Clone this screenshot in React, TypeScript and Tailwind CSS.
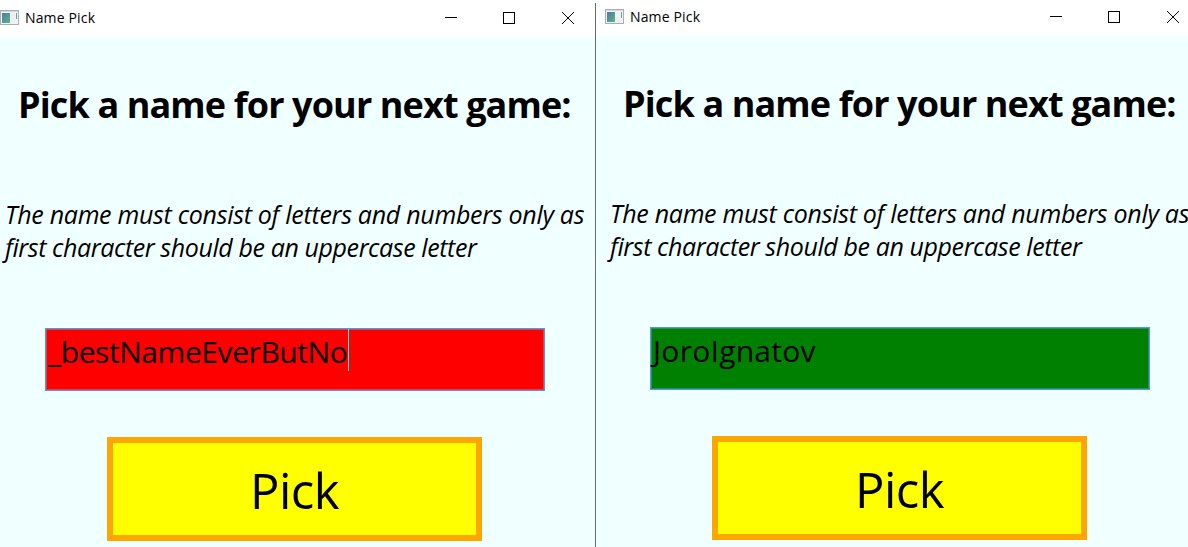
import clsx from "clsx";

type WindowProps = {
  value: string;
  valid: boolean;
  focused?: boolean;
  barClass: string;
  bodyClass: string;
};

function AppIcon() {
  return (
    <svg width="19" height="16" viewBox="0 0 19 16" shapeRendering="crispEdges" className="shrink-0">
      <defs>
        <linearGradient id="pane" x1="0" y1="0" x2="1" y2="1">
          <stop offset="0" stopColor="#4a7ba5" />
          <stop offset="1" stopColor="#5fb585" />
        </linearGradient>
      </defs>
      <rect x="0" y="0" width="19" height="15" fill="#a9adb8" />
      <rect x="1" y="1" width="17" height="13" fill="#f3f3f5" />
      <rect x="1" y="1" width="17" height="1" fill="#d5d8de" />
      <rect x="2" y="3" width="8" height="10" fill="url(#pane)" />
      <rect x="11" y="3" width="4" height="10" fill="#eeeff0" />
      <rect x="16" y="3" width="1" height="6" fill="#5aa596" />
    </svg>
  );
}

function TitleBar({ className }: { className: string }) {
  return (
    <div className={clsx("flex items-start bg-white", className)}>
      <AppIcon />
      <span className="ml-[6px] w-[120px] whitespace-nowrap text-[14px] leading-4 tracking-[0.15px]">Name Pick</span>
      <svg width="131" height="13" viewBox="0 0 131 13" fill="none" stroke="#000" className="ml-[300px] mt-[2px] shrink-0">
        <path d="M0 5.5H12" shapeRendering="crispEdges" />
        <rect x="58.5" y="0.5" width="11" height="11" shapeRendering="crispEdges" />
        <path d="M117 0L129 12M129 0L117 12" />
      </svg>
    </div>
  );
}

function NameWindow({ value, valid, focused, barClass, bodyClass }: WindowProps) {
  return (
    <div className="flex h-full flex-col overflow-hidden bg-[#f0ffff]">
      <TitleBar className={barClass} />
      <div className={clsx("flex flex-col items-start", bodyClass)}>
        <h1 className="ml-[18px] mt-[42px] whitespace-nowrap text-[36px] font-bold leading-[52px] tracking-[-0.88px]">
          Pick a name for your next game:
        </h1>
        <p className="ml-[5px] mt-[67px] whitespace-nowrap text-[25px] italic leading-[33px]">
          <span className="tracking-[-0.29px]">The name must consist of letters and numbers only as</span>
          <br />
          <span className="tracking-[-0.4px]">first character should be an uppercase letter</span>
        </p>
        <div
          className={clsx(
            "ml-[45px] mt-[64px] flex h-[63px] w-[500px] items-start border border-[#4f9be0] pl-[2px] text-[30px] leading-[46px]",
            valid
              ? "bg-[#008000] tracking-[0.27px] shadow-[inset_0_0_0_1px_#2c8f54]"
              : "bg-[#ff0000] tracking-[-0.43px] shadow-[inset_0_0_0_1px_#c8485a]",
          )}
        >
          <span className={clsx("whitespace-nowrap", focused && "w-[300px]")}>{value}</span>
          {focused && <span className="h-[42px] w-px bg-[#00ffff]" />}
        </div>
        <button className="ml-[107px] mt-[46px] h-[104px] w-[375px] border-[6px] border-[#ffa500] bg-[#ffff00] pt-[2px] text-[49px] leading-[90px] tracking-[-0.5px]">
          Pick
        </button>
      </div>
    </div>
  );
}

export default function App() {
  return (
    <main className="flex h-[547px] w-[1188px] overflow-hidden bg-white font-['Open_Sans',sans-serif] text-black">
      <div className="w-[595px] shrink-0">
        <NameWindow value="_bestNameEverButNo" valid={false} focused barClass="h-[37px] shrink-0 pt-[10px]" bodyClass="" />
      </div>
      <div className="mt-[3px] w-px shrink-0 bg-[#666c6c]" />
      <div className="w-[592px] shrink-0">
        <NameWindow value="JoroIgnatov" valid barClass="h-[36px] shrink-0 pl-[9px] pt-[9px]" bodyClass="pl-[9px]" />
      </div>
    </main>
  );
}
